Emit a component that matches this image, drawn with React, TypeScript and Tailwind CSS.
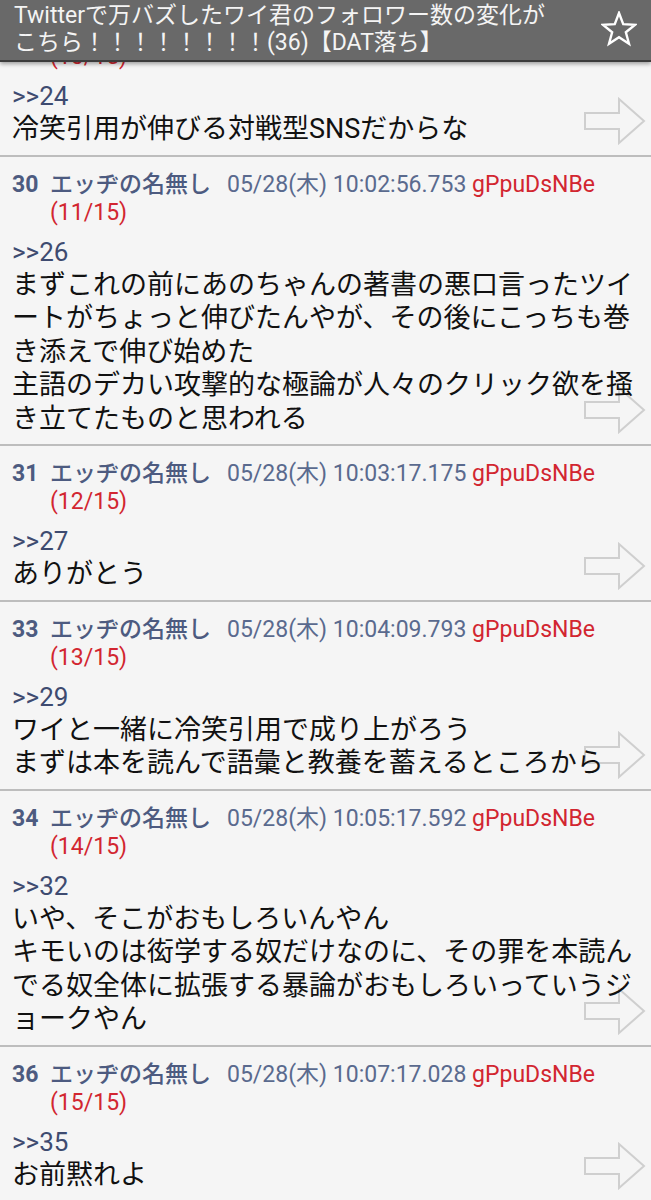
interface Post {
    no: number;
    date: string;
    count: string;
    quote: string;
    body: string[];
}

const posts: Post[] = [
    {
        no: 29,
        date: "",
        count: "(10/15)",
        quote: ">>24",
        body: ["冷笑引用が伸びる対戦型SNSだからな"],
    },
    {
        no: 30,
        date: "05/28(木) 10:02:56.753",
        count: "(11/15)",
        quote: ">>26",
        body: [
            "まずこれの前にあのちゃんの著書の悪口言ったツイートがちょっと伸びたんやが、その後にこっちも巻き添えで伸び始めた",
            "主語のデカい攻撃的な極論が人々のクリック欲を掻き立てたものと思われる",
        ],
    },
    {
        no: 31,
        date: "05/28(木) 10:03:17.175",
        count: "(12/15)",
        quote: ">>27",
        body: ["ありがとう"],
    },
    {
        no: 33,
        date: "05/28(木) 10:04:09.793",
        count: "(13/15)",
        quote: ">>29",
        body: ["ワイと一緒に冷笑引用で成り上がろう", "まずは本を読んで語彙と教養を蓄えるところから"],
    },
    {
        no: 34,
        date: "05/28(木) 10:05:17.592",
        count: "(14/15)",
        quote: ">>32",
        body: [
            "いや、そこがおもしろいんやん",
            "キモいのは衒学する奴だけなのに、その罪を本読んでる奴全体に拡張する暴論がおもしろいっていうジョークやん",
        ],
    },
    {
        no: 36,
        date: "05/28(木) 10:07:17.028",
        count: "(15/15)",
        quote: ">>35",
        body: ["お前黙れよ"],
    },
];

function ReplyArrow() {
    return (
        <svg width="62" height="48" viewBox="0 0 62 48" fill="none" className="absolute right-[5px] bottom-[10px]">
            <path d="M1 16 H35 V2 L60 24 L35 46 V32 H1 Z" stroke="#cfcfcf" strokeWidth="2" />
        </svg>
    );
}

function StarIcon() {
    // 5-point outline star, sharp corners like the app's toolbar icon
    const pts: string[] = [];
    for (let i = 0; i < 10; i++) {
        const r = i % 2 === 0 ? 17 : 7.2;
        const a = (Math.PI / 5) * i - Math.PI / 2;
        pts.push(`${(18 + r * Math.cos(a)).toFixed(2)},${(19 + r * Math.sin(a)).toFixed(2)}`);
    }
    return (
        <svg width="36" height="36" viewBox="0 0 36 36" fill="none">
            <polygon points={pts.join(" ")} stroke="#ffffff" strokeWidth="2.4" strokeLinejoin="miter" />
        </svg>
    );
}

function PostItem({ post, first }: { post: Post; first?: boolean }) {
    return (
        <div className={`relative pl-[12px] pb-[8px] border-b-2 border-[#bdbdbd] ${first ? "-mt-[19px]" : "pt-[14px]"}`}>
            <ReplyArrow />
            {first ? (
                // only the tail of the previous post is left below the toolbar
                <div className="relative pl-[38px] text-[23px] leading-[28px] text-[#d22630]">{post.count}</div>
            ) : (
                <div className="relative flex text-[23px] leading-[28px]">
                    <span className="w-[38px] shrink-0 font-bold text-[#4d5b80]">{post.no}</span>
                    <div className="flex-1">
                        <span className="font-medium text-[#4d5b80] mr-[16px] whitespace-nowrap">エッヂの名無し</span>
                        <span className="text-[#5a6a8e] whitespace-nowrap">{post.date}</span>{" "}
                        <span className="text-[#d22630] whitespace-nowrap">gPpuDsNBe</span>{" "}
                        <span className="text-[#d22630] whitespace-nowrap">{post.count}</span>
                    </div>
                </div>
            )}
            <div className="relative mt-[8px] text-[26px] leading-[34px] text-[#3e4b70]">{post.quote}</div>
            <div className="relative text-[27px] leading-[33.5px] text-[#111111] [line-break:anywhere]">
                {post.body.map((line, i) => (
                    <p key={i}>{line}</p>
                ))}
            </div>
        </div>
    );
}

export default function App() {
    return (
        <div
            className="w-[651px] h-[1200px] overflow-hidden bg-[#f5f5f5] flex flex-col"
            style={{ fontFamily: "Roboto, 'Noto Sans CJK JP', sans-serif" }}
        >
            <div className="relative z-10 shrink-0 h-[62px] bg-[#696969] border-b-2 border-[#3c3c3c] shadow-[0_2px_4px_rgba(0,0,0,0.35)] flex items-center">
                <div className="w-[548px] ml-[14px] text-[23px] leading-[27px] text-[#f4f4f4] -mt-[2px]">
                    Twitterで万バズしたワイ君のフォロワー数の変化がこちら！！！！！！！！(36)【DAT落ち】
                </div>
                <div className="flex-1 flex justify-end pr-[14px] -mt-[2px]">
                    <StarIcon />
                </div>
            </div>
            <div className="flex-1 overflow-hidden">
                {posts.map((p, i) => (
                    <PostItem key={p.no} post={p} first={i === 0} />
                ))}
            </div>
        </div>
    );
}
